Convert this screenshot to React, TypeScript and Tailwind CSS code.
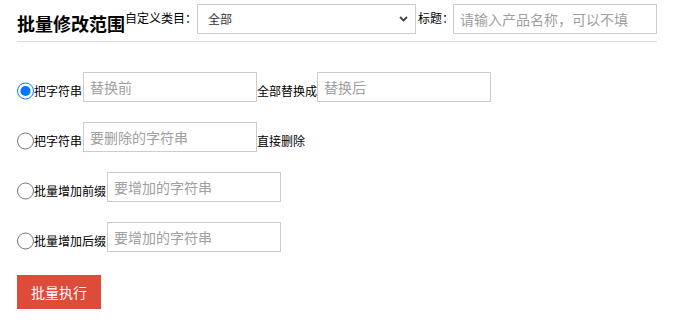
import React from "react";

const font = { fontFamily: '"Noto Sans CJK SC", "Microsoft YaHei", sans-serif' };

function Radio({ checked }: { checked?: boolean }) {
  return (
    <input
      type="radio"
      name="mode"
      defaultChecked={checked}
      className="m-0 mb-[2px] h-[18px] w-[17px] shrink-0 accent-[#0075ff]"
    />
  );
}

function TextInput({ placeholder, w = "w-[174px]" }: { placeholder: string; w?: string }) {
  return (
    <input
      placeholder={placeholder}
      className={`${w} h-[30px] shrink-0 border border-[#cccccc] px-[6px] text-[14px] text-[#333] outline-none placeholder:text-[#a0a0a0]`}
    />
  );
}

function Label({ children }: { children: React.ReactNode }) {
  return <span className="mb-[3px] whitespace-nowrap text-[12px] leading-[16px] text-black">{children}</span>;
}

export default function App() {
  return (
    <div className="min-h-[322px] w-[693px] bg-white pl-[17px]" style={font}>
      <div className="w-[640px] pt-[4px]">
        <div className="flex h-[30px] items-center">
          <h3 className="w-[108px] shrink-0 self-end whitespace-nowrap text-[18px] font-bold leading-[22px] text-black">
            批量修改范围
          </h3>
          <span className="mb-[2px] w-[72px] shrink-0 whitespace-nowrap text-[12px] leading-[16px] text-black">
            自定义类目：
          </span>
          <div className="relative h-[30px] w-[219px] shrink-0">
            <select className="h-[30px] w-[219px] appearance-none border border-[#cccccc] bg-white pl-[10px] text-[12px] text-[#333] outline-none">
              <option>全部</option>
            </select>
            <svg
              className="pointer-events-none absolute right-[8px] top-[12px]"
              width="9"
              height="6"
              viewBox="0 0 9 6"
            >
              <path d="M1 1 L4.5 4.5 L8 1" stroke="#444" strokeWidth="1.8" fill="none" />
            </svg>
          </div>
          <span className="mb-[2px] ml-[2px] w-[35px] shrink-0 whitespace-nowrap text-[12px] leading-[16px] text-black">
            标题：
          </span>
          <TextInput placeholder="请输入产品名称，可以不填" w="w-[204px]" />
        </div>
        <div className="mt-[7px] border-b border-[#dddddd]" />
      </div>

      <div className="mt-[30px] flex h-[30px] items-end">
        <Radio checked />
        <Label>把字符串</Label>
        <div className="ml-[1px]" />
        <TextInput placeholder="替换前" />
        <Label>全部替换成</Label>
        <TextInput placeholder="替换后" />
      </div>

      <div className="mt-[20px] flex h-[30px] items-end">
        <Radio />
        <Label>把字符串</Label>
        <div className="ml-[1px]" />
        <TextInput placeholder="要删除的字符串" />
        <Label>直接删除</Label>
      </div>

      <div className="mt-[20px] flex h-[30px] items-end">
        <Radio />
        <Label>批量增加前缀</Label>
        <div className="ml-[1px]" />
        <TextInput placeholder="要增加的字符串" />
      </div>

      <div className="mt-[20px] flex h-[30px] items-end">
        <Radio />
        <Label>批量增加后缀</Label>
        <div className="ml-[1px]" />
        <TextInput placeholder="要增加的字符串" />
      </div>

      <button className="mt-[23px] h-[34px] w-[84px] bg-[#dd4b39] text-[14px] text-white">批量执行</button>
    </div>
  );
}
